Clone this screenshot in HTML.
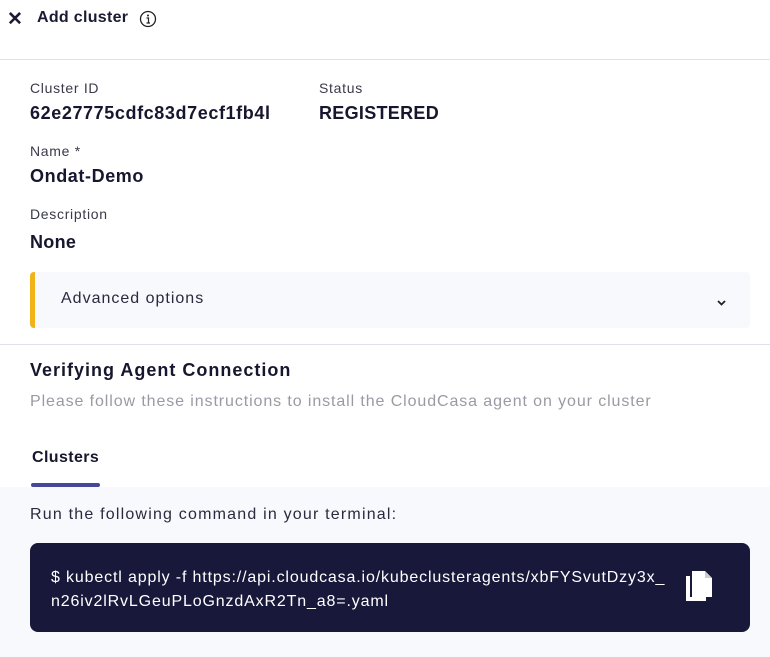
<!DOCTYPE html>
<html><head><style>
*{margin:0;padding:0;box-sizing:border-box}
body{width:770px;height:657px;background:#fff;font-family:"Liberation Sans",sans-serif;color:#1a1a33;position:relative;overflow:hidden}
.a{position:absolute;white-space:nowrap}
.lbl{font-size:14px;color:#3a3a4a;letter-spacing:0.7px}
.val{font-size:18px;font-weight:bold;color:#16162e;letter-spacing:0.3px}
</style></head><body>
<div class="a" style="left:7px;top:8px;font-size:19px;font-weight:bold">✕</div>
<div class="a" style="left:37px;top:9px;font-size:16px;font-weight:bold;letter-spacing:0.3px">Add cluster</div>
<svg class="a" style="left:139px;top:10px" width="18" height="18" viewBox="0 0 18 18"><circle cx="9" cy="9" r="7.5" fill="none" stroke="#222" stroke-width="1.3"/><circle cx="9" cy="5.5" r="1" fill="#222"/><path d="M7.5 8h2v5M7.5 13h3.5" stroke="#222" stroke-width="1.2" fill="none"/></svg>
<div class="a" style="left:0;top:59px;width:770px;height:1px;background:#e1e1e8"></div>
<div class="a lbl" style="left:30px;top:80px">Cluster ID</div>
<div class="a val" style="left:30px;top:103px;letter-spacing:0.6px">62e27775cdfc83d7ecf1fb4l</div>
<div class="a lbl" style="left:319px;top:80px">Status</div>
<div class="a val" style="left:319px;top:103px">REGISTERED</div>
<div class="a lbl" style="left:30px;top:143px">Name *</div>
<div class="a val" style="left:30px;top:166px;letter-spacing:0.6px">Ondat-Demo</div>
<div class="a lbl" style="left:30px;top:206px">Description</div>
<div class="a val" style="left:30px;top:232px">None</div>
<div class="a" style="left:30px;top:272px;width:720px;height:56px;background:#f8f9fd;border-radius:4px;border-left:5px solid #f0b419"></div>
<div class="a" style="left:61px;top:290px;font-size:16px;color:#2a2a3e;letter-spacing:1px">Advanced options</div>
<svg class="a" style="left:716px;top:298px" width="11" height="9" viewBox="0 0 11 9"><path d="M2 3l3.5 3.5L9 3" stroke="#222" stroke-width="1.8" fill="none"/></svg>
<div class="a" style="left:0;top:344px;width:770px;height:1px;background:#e1e1e8"></div>
<div class="a" style="left:30px;top:360px;font-size:18px;font-weight:bold;color:#16162e;letter-spacing:1px">Verifying Agent Connection</div>
<div class="a" style="left:30px;top:393px;font-size:16px;color:#9a9aa4;letter-spacing:0.9px">Please follow these instructions to install the CloudCasa agent on your cluster</div>
<div class="a" style="left:32px;top:449px;font-size:16px;font-weight:bold;color:#16162e;letter-spacing:0.4px">Clusters</div>
<div class="a" style="left:0;top:487px;width:770px;height:170px;background:#f8f9fd"></div>
<div class="a" style="left:31px;top:483px;width:69px;height:4px;background:#47479a;border-radius:2px"></div>
<div class="a" style="left:30px;top:506px;font-size:16px;color:#2a2a3e;letter-spacing:1.2px">Run the following command in your terminal:</div>
<div class="a" style="left:30px;top:543px;width:720px;height:89px;background:#18183a;border-radius:8px"></div>
<div class="a" style="left:51px;top:566px;font-size:16px;color:#fff;line-height:24px;letter-spacing:0.85px">$ kubectl apply -f https://api.cloudcasa.io/kubeclusteragents/xbFYSvutDzy3x_<br>n26iv2lRvLGeuPLoGnzdAxR2Tn_a8=.yaml</div>
<svg class="a" style="left:685px;top:571px" width="28" height="31" viewBox="0 0 28 31"><path d="M1 5h4v21h16v4H1z" fill="#fff"/><path d="M7 0h13l7 7v19H7z" fill="#fff"/><path d="M20 0v7h7" fill="#ccc"/></svg>
</body></html>
